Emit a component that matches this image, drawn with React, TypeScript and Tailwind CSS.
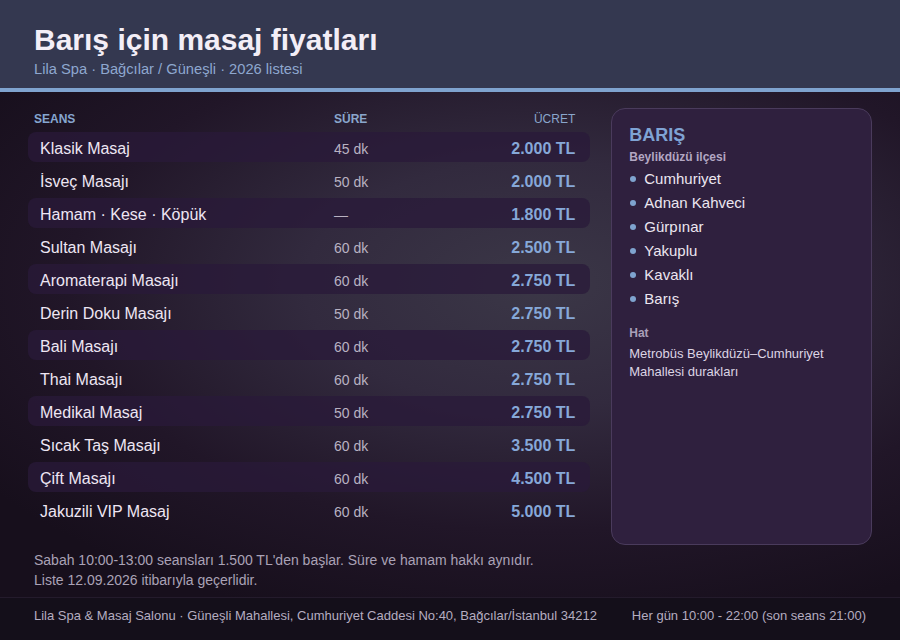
const seanslar = [
  { ad: 'Klasik Masaj', sure: '45 dk', ucret: '2.000 TL' },
  { ad: 'İsveç Masajı', sure: '50 dk', ucret: '2.000 TL' },
  { ad: 'Hamam · Kese · Köpük', sure: '—', ucret: '1.800 TL' },
  { ad: 'Sultan Masajı', sure: '60 dk', ucret: '2.500 TL' },
  { ad: 'Aromaterapi Masajı', sure: '60 dk', ucret: '2.750 TL' },
  { ad: 'Derin Doku Masajı', sure: '50 dk', ucret: '2.750 TL' },
  { ad: 'Bali Masajı', sure: '60 dk', ucret: '2.750 TL' },
  { ad: 'Thai Masajı', sure: '60 dk', ucret: '2.750 TL' },
  { ad: 'Medikal Masaj', sure: '50 dk', ucret: '2.750 TL' },
  { ad: 'Sıcak Taş Masajı', sure: '60 dk', ucret: '3.500 TL' },
  { ad: 'Çift Masajı', sure: '60 dk', ucret: '4.500 TL' },
  { ad: 'Jakuzili VIP Masaj', sure: '60 dk', ucret: '5.000 TL' },
];

const mahalleler = ['Cumhuriyet', 'Adnan Kahveci', 'Gürpınar', 'Yakuplu', 'Kavaklı', 'Barış'];

export default function App() {
  return (
    <div className="flex h-[640px] w-[900px] flex-col overflow-hidden bg-[#1a1020] font-['Liberation_Sans',Arial,sans-serif]">
      {/* Header */}
      <header className="border-b-4 border-[#7fa3cf] bg-[#343850] px-[34px] pt-[22px] pb-[9px]">
        <h1 className="text-[30px] leading-[36px] font-bold text-[#f3eef7]">Barış için masaj fiyatları</h1>
        <p className="mt-[1px] text-[14.7px] leading-5 text-[#8ea7cf]">Lila Spa · Bağcılar / Güneşli · 2026 listesi</p>
      </header>

      {/* Body */}
      <main className="flex-1 bg-[radial-gradient(ellipse_75%_70%_at_60%_38%,#3b3747_0%,#322a3e_35%,#211628_70%,#170f1c_100%)] px-7 pt-4">
        <div className="flex gap-[21px]">
          {/* Price table */}
          <div className="w-[563px]">
            <div className="grid h-6 grid-cols-[300px_1fr_auto] pt-[3px] pr-[15px] pl-[6px] text-[12px] leading-4 font-bold">
              <span className="text-[#86a6d0]">SEANS</span>
              <span className="text-[#8aa6cc]">SÜRE</span>
              <span className="text-right font-normal text-[#8aa6cc]">ÜCRET</span>
            </div>
            <div className="flex flex-col gap-[3px]">
              {seanslar.map((s, i) => (
                <div
                  key={s.ad}
                  className={
                    i % 2 === 0
                      ? 'grid h-[30px] grid-cols-[294px_1fr_auto] items-center rounded-lg bg-[#2a1a3a]/75 pt-[4px] pr-[15px] pl-3'
                      : 'grid h-[30px] grid-cols-[294px_1fr_auto] items-center rounded-lg pt-[4px] pr-[15px] pl-3'
                  }
                >
                  <span className="text-[16px] text-[#eee6f3]">{s.ad}</span>
                  <span className="text-[14px] text-[#b9b2c2]">{s.sure}</span>
                  <span className="text-right text-[16px] font-bold text-[#86a8d8]">{s.ucret}</span>
                </div>
              ))}
            </div>
          </div>

          {/* Side card */}
          <aside className="h-[437px] w-[261px] rounded-[14px] border border-[#4a3b5c] bg-[#2f203e] px-[17px] pt-[14px]">
            <h2 className="text-[18px] leading-6 font-bold text-[#7fa3d4]">BARIŞ</h2>
            <p className="mt-[2px] text-[12px] leading-4 font-bold text-[#b3a7c3]">Beylikdüzü ilçesi</p>
            <ul className="mt-[2px]">
              {mahalleler.map((m) => (
                <li key={m} className="flex h-6 items-center gap-2 text-[15px] text-[#ece6f0]">
                  <span className="ml-[1px] h-1.5 w-1.5 rounded-full bg-[#7fa3cf]" />
                  {m}
                </li>
              ))}
            </ul>
            <p className="mt-[14px] text-[12px] leading-4 font-bold text-[#a99fb8]">Hat</p>
            <p className="mt-1 text-[13px] leading-[18px] text-[#dcd4e4]">
              Metrobüs Beylikdüzü–Cumhuriyet
              <br />
              Mahallesi durakları
            </p>
          </aside>
        </div>

        <p className="mt-[5px] pl-[6px] text-[14px] leading-5 text-[#aaa2b6]">
          Sabah 10:00-13:00 seansları 1.500 TL'den başlar. Süre ve hamam hakkı aynıdır.
          <br />
          Liste 12.09.2026 itibarıyla geçerlidir.
        </p>
      </main>

      {/* Footer */}
      <footer className="flex h-[43px] justify-between border-t border-[#241b2c] bg-[#140f1a] px-[34px] pt-[9px] text-[13px] leading-[18px] text-[#b5adc0]">
        <span>Lila Spa &amp; Masaj Salonu · Güneşli Mahallesi, Cumhuriyet Caddesi No:40, Bağcılar/İstanbul 34212</span>
        <span>Her gün 10:00 - 22:00 (son seans 21:00)</span>
      </footer>
    </div>
  );
}
